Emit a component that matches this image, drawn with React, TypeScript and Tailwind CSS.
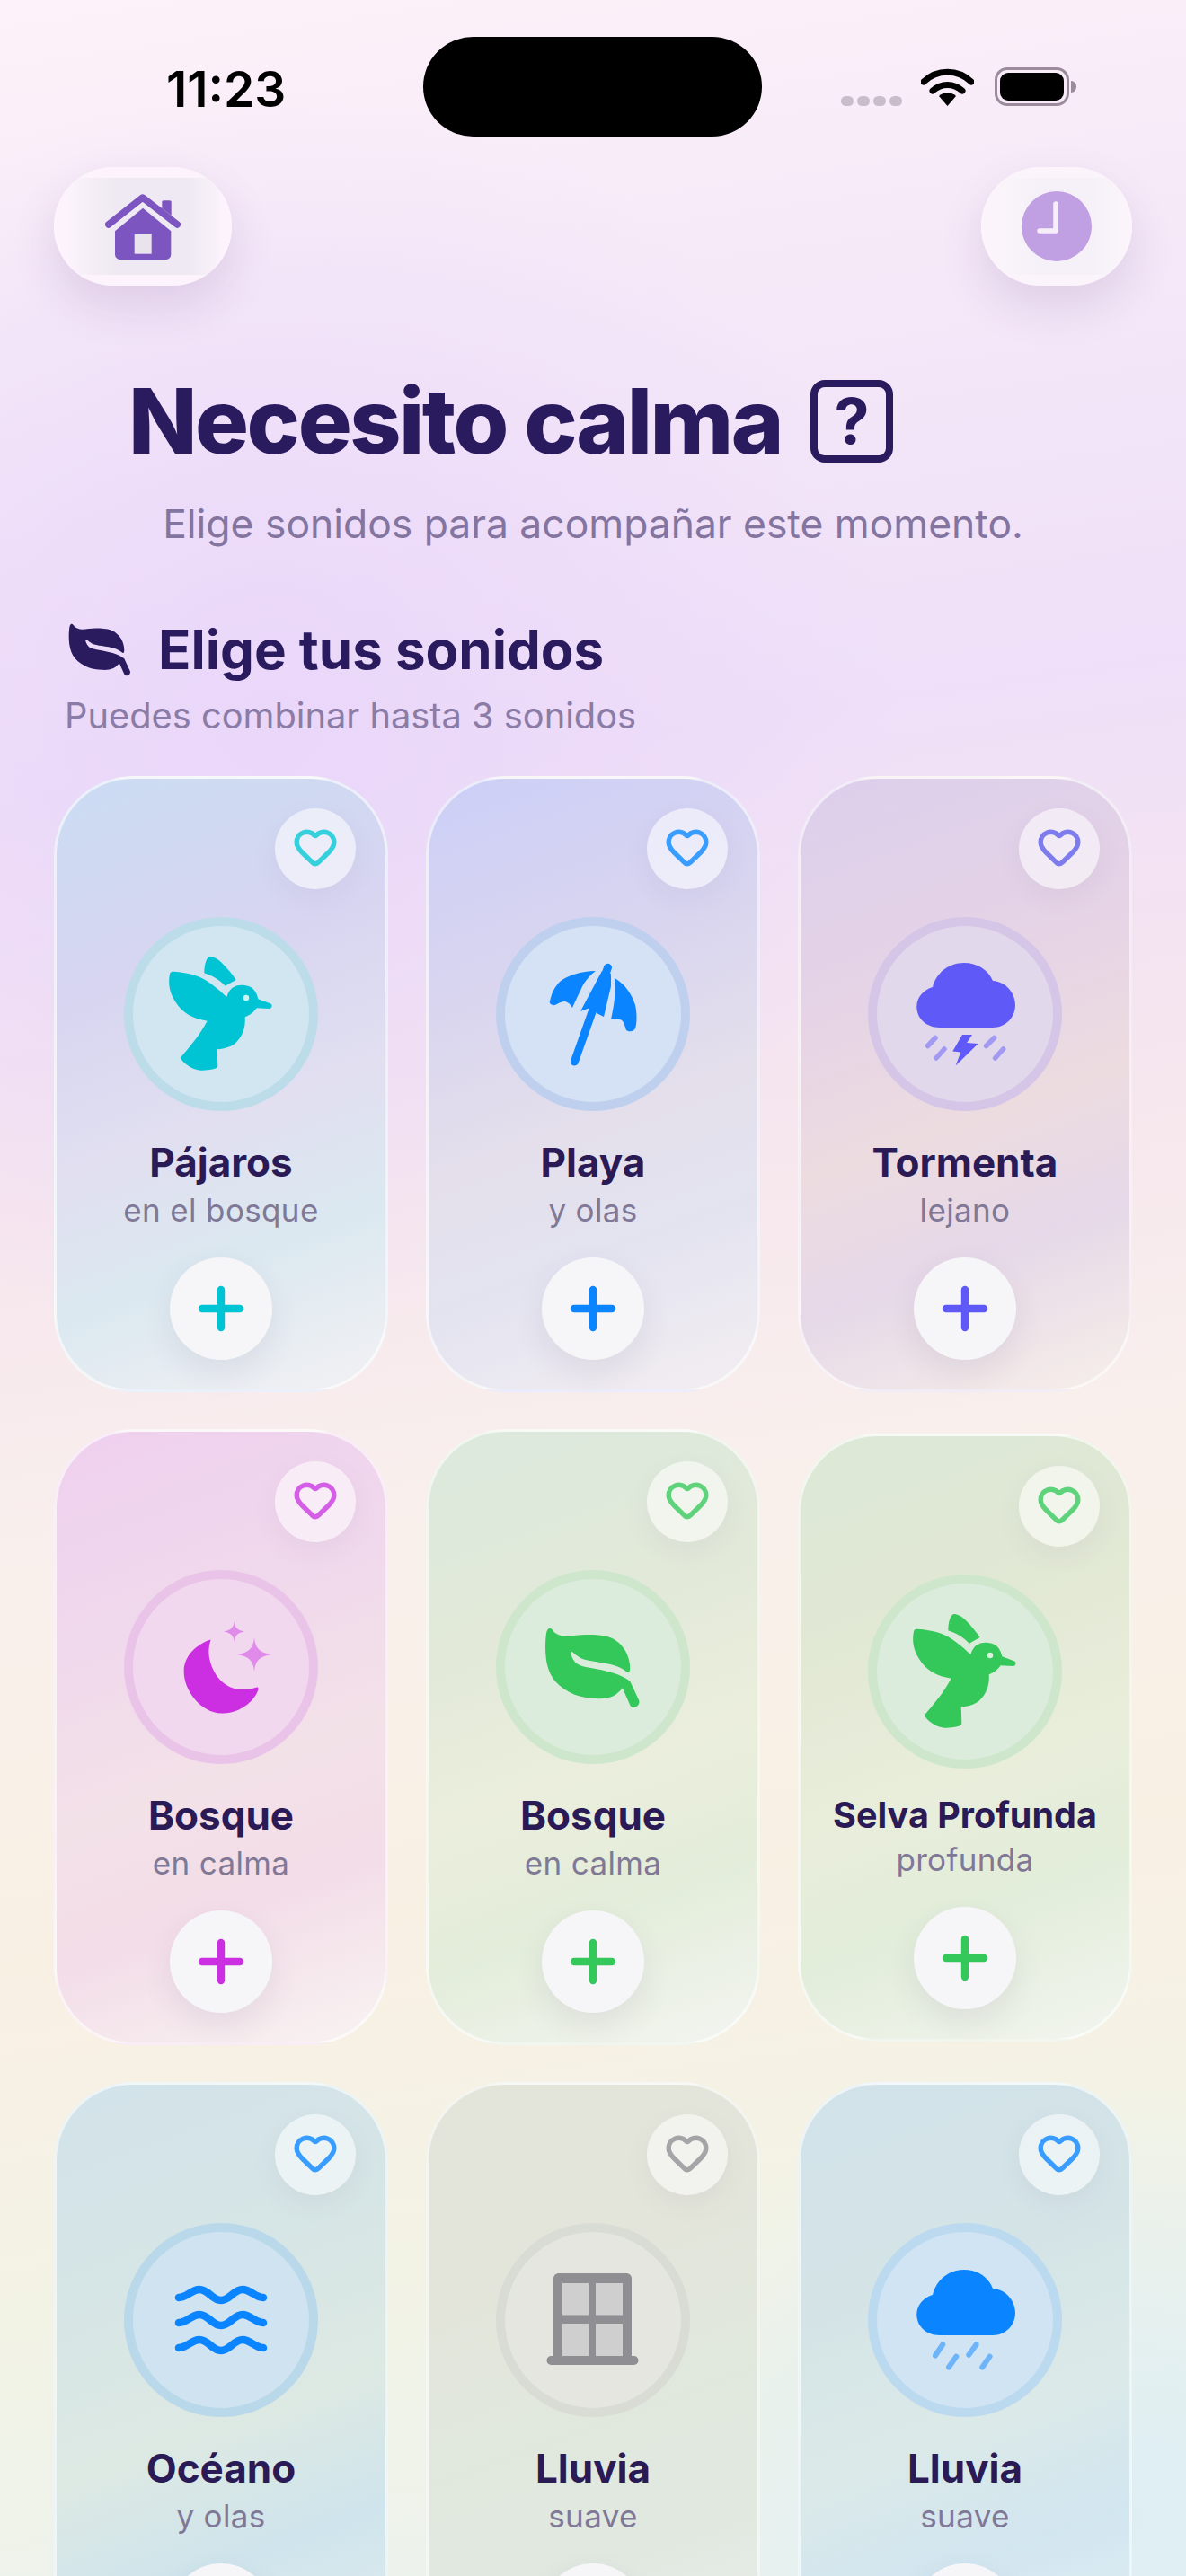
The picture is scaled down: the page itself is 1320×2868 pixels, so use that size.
import { Heart, Plus } from "lucide-react";
import type { ReactNode } from "react";

const BIRD = (
  <>
    <path d="M51.3 62.3C52 61 53.5 60.5 55.3 60.7C64 61.3 71 62.5 78.7 64.7C86 67 92.5 71 98.7 75.7C104.5 80 109.5 84.5 114.3 89C115.5 85 117.5 81.5 120.3 79C123.5 76.7 127.5 75.5 132 75.7C137 76 141 77.5 143.7 80C146.8 83 148.5 87 149.3 91.3L162.7 96.3C164.5 97 165 98.5 164.3 100C163.8 101.3 163 102 162 102L147.7 101.3C146 103.5 144 105.7 142 107.3C139.8 109 137 110.5 134.7 111.3C135 116 134.7 120 133.7 124C132 131 128 136.5 123.7 140.7C118 145 111 147 103.7 147.3L104.3 165.7C104.3 167.5 102.5 168.5 100.3 169C95 170.3 90 170.9 85.3 170.7C79.5 170.3 74.5 168 70.3 164.7C67 162.3 64.5 159.7 62.7 156.7C68 150.5 73.5 144 78.7 137.3C84 130.5 88.5 123 92.7 115.7C85 114.5 78 112.3 72 109C65.5 105 60.5 100 57 94C53 88 51 82 50.3 75.7C50 71 50.3 66 51.3 62.3Z" />
    <path d="M89.3 62.3C89.3 57 90 53 91.3 49C92.5 45.7 94.5 43.7 97 44C101.5 45 105.5 47.7 108.7 50.7C114.5 56.5 120 63 124.7 70L112.7 76.7C109.5 73.5 106 70.5 102 68C98 65.5 93.5 63.7 89.3 62.3Z" />
    <circle cx="136" cy="90" r="3.2" fill="#fff" fillOpacity="0.8" />
  </>
);

const UMBRELLA = (
  <>
    <path d="M124.5 56.3L87.4 161" fill="none" stroke="currentColor" strokeWidth="9" strokeLinecap="round" />
    <path d="M60.2 93C62 84 66 77 71 72C79 65 95 60 111 60C103 66 97 74 94 82C91 88 88 94 85 101C82 96 79 94 76 94C71 94 67 99 63 98C60 97 59 95 60.2 93Z" />
    <path d="M118 60L128 63V77L120 111L112 107C110 103 106 101 102 102L94 105Z" />
    <path d="M132 68C143 74 151 85 155 98C157 107 157 118 155 124C153 128 148 128 145 126C143 120 142 114 137 114L128 114C131 100 134 84 132 68Z" />
  </>
);

const CLOUD = "M80 123C64 123 54.3 112 54.3 100C54.3 89 62 81 72 78C76 62 90 51 107 51C122 51 134 59 139 71C154 72 164 85 164 98C164 112 153 123 139 123Z";

const STORM = (
  <>
    <path d={CLOUD} />
    <path
      d="M66.6 143.5L75 134.5M76 157L85 147M131.6 143.5L140.6 134.5M141.6 157L150.6 147"
      fill="none"
      stroke="currentColor"
      strokeOpacity="0.5"
      strokeWidth="5.5"
      strokeLinecap="round"
    />
    <path d="M105 131H116L110 140L122.6 141L97.6 165.5L103.3 150.4L94.3 149.5Z" />
  </>
);

const MOON = (
  <>
    <path d="M96.6 77.6C80 83 67 96 66.7 112C66 133 85 159 108.6 159.4C128 160 145 147 149.5 133C150 130 148 130 146 131C140 133 133 133 127 132.7C112 131 99 118 95 98C94 92 94 86 96.6 77.6Z" />
    <path
      d="M145 75C146 87 151 92 164 94C151 96 146 101 145 113C144 101 139 96 126 94C139 92 144 87 145 75Z"
      fillOpacity="0.45"
    />
    <path
      d="M122.7 57C123.4 64 126 67 134 68.5C126 70 123.4 73 122.7 80C122 73 119 70 111 68.5C119 67 122 64 122.7 57Z"
      fillOpacity="0.45"
    />
  </>
);

const LEAF =
  "M59.2 64.7C61 64 63 66.7 64.8 69.3C68 72 72.5 73.7 77.5 73.7C85 73.7 92.5 72 100.8 72C110 72 120 72.5 127.5 75.3C135 78.5 140.5 84 144.2 90.3C147.5 96.5 149.5 103.5 149.2 110.3C149 113 148 114.5 146.8 114.3C143.5 111.5 139 109 134.2 107C126.5 104.3 118.5 103.5 110.8 102C104.5 101 99 100.3 94.2 98C90.5 96 87.5 93.5 85.2 91.3C84 90.5 83 91.7 83.5 93.7C84.5 97.5 86.5 101 89.2 103.7C93 106.5 98.5 107.7 104.2 108.7C113 110.3 122.5 112 130.8 114.7C138 117 144 120 149.2 123.7L159.2 145.3C160.5 149 157 153 153.2 153C150.7 153 149.3 151 148.5 148.7L140.8 131.3C138 135 134.5 138 130.8 140.3C125 143 118 143.5 110.8 143C103 142.5 95 141.5 87.5 138.7C79 135 71.5 130 65.8 123.7C60 116.5 57 108 55.8 98.7C54.7 90 54.8 80 55.8 72C56.3 68 57.5 65.5 59.2 64.7Z";

const WAVES = (
  <path
    d="M61 83C70 83 75 74 84 74C94 74 98 86 108 86C118 86 122 74 132 74C141 74 146 83 155 83M61 111C70 111 75 102 84 102C94 102 98 114 108 114C118 114 122 102 132 102C141 102 146 111 155 111M61 139C70 139 75 130 84 130C94 130 98 142 108 142C118 142 122 130 132 130C141 130 146 139 155 139"
    fill="none"
    stroke="currentColor"
    strokeWidth="8.5"
    strokeLinecap="round"
  />
);

const WINDOW = (
  <>
    <path d="M64 62C64 58 67 56 70 56H145C148 56 151 58 151 62V150H64Z" />
    <rect x="56.5" y="148" width="102" height="10" rx="5" />
    <g fill="#cfcfcf">
      <rect x="74" y="67" width="29.5" height="35.5" />
      <rect x="111" y="67" width="30" height="35.5" />
      <rect x="74" y="112" width="29.5" height="36" />
      <rect x="111" y="112" width="30" height="36" />
    </g>
  </>
);

const RAIN = (
  <>
    <path d="M80 125C64 125 54.3 114 54.3 102C54.3 91 62 83 72 80C76 63 90 52 107 52C122 52 134 60 139 73C154 74 164 87 164 100C164 114 153 125 139 125Z" />
    <path
      d="M75 147.5L83.3 135.2M90 160.5L98.3 148.6M112.3 146.8L120.6 135.2M127.3 160.5L135.6 148.6"
      fill="none"
      stroke="currentColor"
      strokeOpacity="0.5"
      strokeWidth="6"
      strokeLinecap="round"
    />
  </>
);

type Sound = {
  name: string;
  sub: string;
  icon: ReactNode;
  card: string;
  circle: string;
  color: string;
  heart: string;
  small?: boolean;
};

const sounds: Sound[] = [
  {
    name: "Pájaros",
    sub: "en el bosque",
    icon: BIRD,
    card: "bg-[linear-gradient(160deg,#cadcf3_0%,#d8d5f1_32%,#e1dff0_55%,#dbe8f0_74%,#f2f1f4_100%)]",
    circle: "bg-[#d1e6f1] border-[#bcdcea]",
    color: "text-[#00c4d4]",
    heart: "text-[#35d0dc]",
  },
  {
    name: "Playa",
    sub: "y olas",
    icon: UMBRELLA,
    card: "bg-[linear-gradient(160deg,#cccff7_0%,#d9d5ef_32%,#e4dfeb_55%,#e3e3f0_74%,#f3eef1_100%)]",
    circle: "bg-[#d5e1f4] border-[#bfd0ef]",
    color: "text-[#0a84ff]",
    heart: "text-[#399dff]",
  },
  {
    name: "Tormenta",
    sub: "lejano",
    icon: STORM,
    card: "bg-[linear-gradient(160deg,#dccfec_0%,#e5d3e6_32%,#ecdce0_55%,#e6d8e8_74%,#f6efe9_100%)]",
    circle: "bg-[#e2d8ec] border-[#d5c5e6]",
    color: "text-[#5f59f7]",
    heart: "text-[#7e7cec]",
  },
  {
    name: "Bosque",
    sub: "en calma",
    icon: MOON,
    card: "bg-[linear-gradient(160deg,#efd0ef_0%,#f0d9ec_32%,#f3e1e8_55%,#f3dde8_74%,#f8f3f2_100%)]",
    circle: "bg-[#f1d8ef] border-[#eac4e8]",
    color: "text-[#cc2ee2]",
    heart: "text-[#d45fe6]",
  },
  {
    name: "Bosque",
    sub: "en calma",
    icon: <path d={LEAF} />,
    card: "bg-[linear-gradient(160deg,#dbe9dc_0%,#e2e9d9_32%,#ebeedc_55%,#e3edda_74%,#f3f5f1_100%)]",
    circle: "bg-[#dcecdc] border-[#cde6cc]",
    color: "text-[#34c759]",
    heart: "text-[#5fd37c]",
  },
  {
    name: "Selva Profunda",
    sub: "profunda",
    icon: BIRD,
    card: "bg-[linear-gradient(160deg,#dce8d6_0%,#e1e8d4_32%,#e9eedb_55%,#e2edda_74%,#f2f5ef_100%)]",
    circle: "bg-[#dcecdc] border-[#cde6cc]",
    color: "text-[#34c759]",
    heart: "text-[#5fd37c]",
    small: true,
  },
  {
    name: "Océano",
    sub: "y olas",
    icon: WAVES,
    card: "bg-[linear-gradient(160deg,#d2e3ea_0%,#d6e5e5_32%,#dde9e3_55%,#cfe4ec_74%,#e4f0f0_100%)]",
    circle: "bg-[#cfe4f0] border-[#b9d8ea]",
    color: "text-[#0a84ff]",
    heart: "text-[#399dff]",
  },
  {
    name: "Lluvia",
    sub: "suave",
    icon: WINDOW,
    card: "bg-[linear-gradient(160deg,#e4e5da_0%,#e3e5da_32%,#e0e8de_55%,#e0e8e0_74%,#edf1ec_100%)]",
    circle: "bg-[#e4e6df] border-[#d9dcd4]",
    color: "text-[#8e8e93]",
    heart: "text-[#a5a5a8]",
  },
  {
    name: "Lluvia",
    sub: "suave",
    icon: RAIN,
    card: "bg-[linear-gradient(160deg,#d1e2ea_0%,#d4e4e6_32%,#dbe9e8_55%,#d2e6f0_74%,#e4f1f4_100%)]",
    circle: "bg-[#d1e4f3] border-[#bbd9ef]",
    color: "text-[#0a84ff]",
    heart: "text-[#399dff]",
  },
];

function SoundCard({ sound }: { sound: Sound }) {
  return (
    <div
      className={`relative flex w-[372px] flex-col items-center rounded-[88px] border-[3px] border-white/60 pt-[154px] pb-[33px] ${sound.card} ${sound.small ? "self-center" : ""}`}
    >
      <button
        className={`absolute top-[33px] right-[33px] flex h-[90px] w-[90px] items-center justify-center rounded-full bg-white/55 shadow-[0_10px_30px_rgba(90,60,120,0.06)] ${sound.heart}`}
      >
        <Heart size={50} strokeWidth={2.6} className="-mt-1" />
      </button>
      <div className={`h-[216px] w-[216px] rounded-full border-[10px] ${sound.circle}`}>
        <svg viewBox="0 0 216 216" fill="currentColor" className={`-m-[10px] h-[216px] w-[216px] ${sound.color}`}>
          {sound.icon}
        </svg>
      </div>
      <p
        className={`mt-[31px] font-bold text-[#2a1a55] ${sound.small ? "text-[39.5px] leading-[43px]" : "text-[44px] leading-[52px]"}`}
      >
        {sound.name}
      </p>
      <p className="mt-[5px] text-[35px] leading-[44px] tracking-[0.01em] text-[#7f7896]">{sound.sub}</p>
      <button
        className={`mt-[31px] flex h-[114px] w-[114px] items-center justify-center rounded-full bg-[#f6f6f8] shadow-[0_14px_34px_rgba(70,50,100,0.09)] ${sound.color}`}
      >
        <Plus size={72} strokeWidth={2.8} />
      </button>
    </div>
  );
}

export default function App() {
  return (
    <div className="h-[2868px] w-[1320px] overflow-hidden bg-[radial-gradient(ellipse_700px_700px_at_300px_800px,rgba(232,212,250,0.8),transparent),radial-gradient(ellipse_600px_500px_at_1250px_2800px,rgba(220,238,245,0.9),transparent),linear-gradient(172deg,#fdf2f9_0%,#f6eaf8_12%,#efdff8_30%,#f6e6ee_45%,#f9f0ec_58%,#f9f0e4_72%,#f3f3e5_84%,#eaf2ee_100%)] font-['Inter','Noto_Sans',sans-serif]">
      {/* status bar */}
      <div className="flex pt-[41px]">
        <div className="flex w-[471px] pt-[28px] pl-[185px]">
          <span className="text-[55px] leading-[60px] font-semibold text-black">11:23</span>
        </div>
        <div className="h-[111px] w-[377px] rounded-full bg-black" />
        <div className="flex h-[77px] items-end pl-[88px]">
          <div className="flex gap-[4px]">
            <span className="h-[11px] w-[14px] rounded-full bg-[#cbbccb]" />
            <span className="h-[11px] w-[14px] rounded-full bg-[#cbbccb]" />
            <span className="h-[11px] w-[14px] rounded-full bg-[#cbbccb]" />
            <span className="h-[11px] w-[14px] rounded-full bg-[#cbbccb]" />
          </div>
          <svg viewBox="0 0 59 42" className="ml-[21px] h-[42px] w-[59px]">
            <path d="M3 15A38 38 0 0 1 56 15" fill="none" stroke="#000" strokeWidth="7" strokeLinecap="round" />
            <path d="M13 25A24 24 0 0 1 46 25" fill="none" stroke="#000" strokeWidth="7" strokeLinecap="round" />
            <path d="M29.5 42L20 31A14 14 0 0 1 39 31Z" fill="#000" />
          </svg>
          <div className="ml-[23px] flex h-[43px] w-[83px] items-center justify-center rounded-[14px] border-[3px] border-[#9b8b9c]">
            <div className="h-[31px] w-[71px] rounded-[9px] bg-black" />
          </div>
          <div className="mb-[15px] ml-[2px] h-[13px] w-[6px] rounded-r-full bg-[#9b8b9c]" />
        </div>
      </div>

      {/* top buttons */}
      <div className="mt-[34px] flex justify-between pr-[60px] pl-[60px]">
        <div className="rounded-[66px] shadow-[0_22px_50px_rgba(90,50,120,0.14)]">
          <button className="flex h-[132px] w-[198px] items-center justify-center overflow-hidden rounded-[66px] bg-[#fcf3fc]">
            <div className="flex h-[108px] w-[198px] items-center justify-center bg-[linear-gradient(90deg,#fcf3fc_8%,#eee9f2_35%,#eee9f2_75%,#fcf3fc_95%)]">
              <svg viewBox="0 0 85 73" className="h-[73px] w-[85px]">
                <path d="M3.7 34L41.7 4L80.3 34" fill="none" stroke="#7d55c0" strokeWidth="7.5" strokeLinecap="round" strokeLinejoin="round" />
                <path d="M63.3 9C63.3 8 64 7.3 65 7.3H72C73 7.3 73.7 8 73.7 9V24L63.3 16Z" fill="#7d55c0" />
                <path d="M42 15.7L73.3 41.3V67C73.3 70.5 71 73 67.5 73H17C13.5 73 11 70.5 11 67V41.3Z" fill="#7d55c0" strokeLinejoin="round" />
                <rect x="32.7" y="44" width="19" height="22.7" fill="#e9e3ee" />
              </svg>
            </div>
          </button>
        </div>
        <div className="rounded-[66px] shadow-[0_22px_50px_rgba(90,50,120,0.14)]">
          <button className="flex h-[132px] w-[168px] items-center justify-center overflow-hidden rounded-[66px] bg-[#fbf4fb]">
            <div className="flex h-[108px] w-[168px] items-center justify-center bg-[linear-gradient(90deg,#fbf4fb_8%,#f6f1f8_35%,#f6f1f8_75%,#fbf4fb_95%)]">
              <svg viewBox="0 0 78 78" className="h-[78px] w-[78px]">
                <circle cx="39" cy="39" r="39" fill="#c0a0e3" />
                <path d="M38 14V44H20" fill="none" stroke="#f6eef8" strokeWidth="5.5" strokeLinecap="round" strokeLinejoin="round" />
              </svg>
            </div>
          </button>
        </div>
      </div>

      {/* heading */}
      <div className="mt-[105px] flex items-center gap-[32px] pl-[143px]">
        <h1 className="text-[100px] leading-[92px] font-extrabold tracking-[-0.025em] text-[#2a1a5e]">Necesito calma</h1>
        <span className="flex h-[92px] w-[92px] items-center justify-center rounded-[16px] border-[8px] border-[#2a1a5e] text-[70px] leading-none font-bold text-[#2a1a5e]">
          ?
        </span>
      </div>
      <p className="mt-[40px] text-center text-[44.4px] leading-[56px] text-[#83759f]">
        Elige sonidos para acompañar este momento.
      </p>

      {/* section title */}
      <div className="mt-[82px] flex items-center gap-[30px] pl-[76px]">
        <svg viewBox="54 62 107 92" preserveAspectRatio="none" className="h-[60px] w-[70px] fill-[#2a1a5e]">
          <path d={LEAF} />
        </svg>
        <h2 className="text-[60px] leading-[60px] font-bold text-[#2a1a5e]">Elige tus sonidos</h2>
      </div>
      <p className="mt-[20px] pl-[72px] text-[39.8px] leading-[48px] text-[#8a7ca6]">Puedes combinar hasta 3 sonidos</p>

      {/* cards */}
      <div className="mt-[43px] ml-[60px] grid w-[1200px] grid-cols-3 gap-x-[42px] gap-y-[41px]">
        {sounds.map((s, i) => (
          <SoundCard key={i} sound={s} />
        ))}
      </div>
    </div>
  );
}
